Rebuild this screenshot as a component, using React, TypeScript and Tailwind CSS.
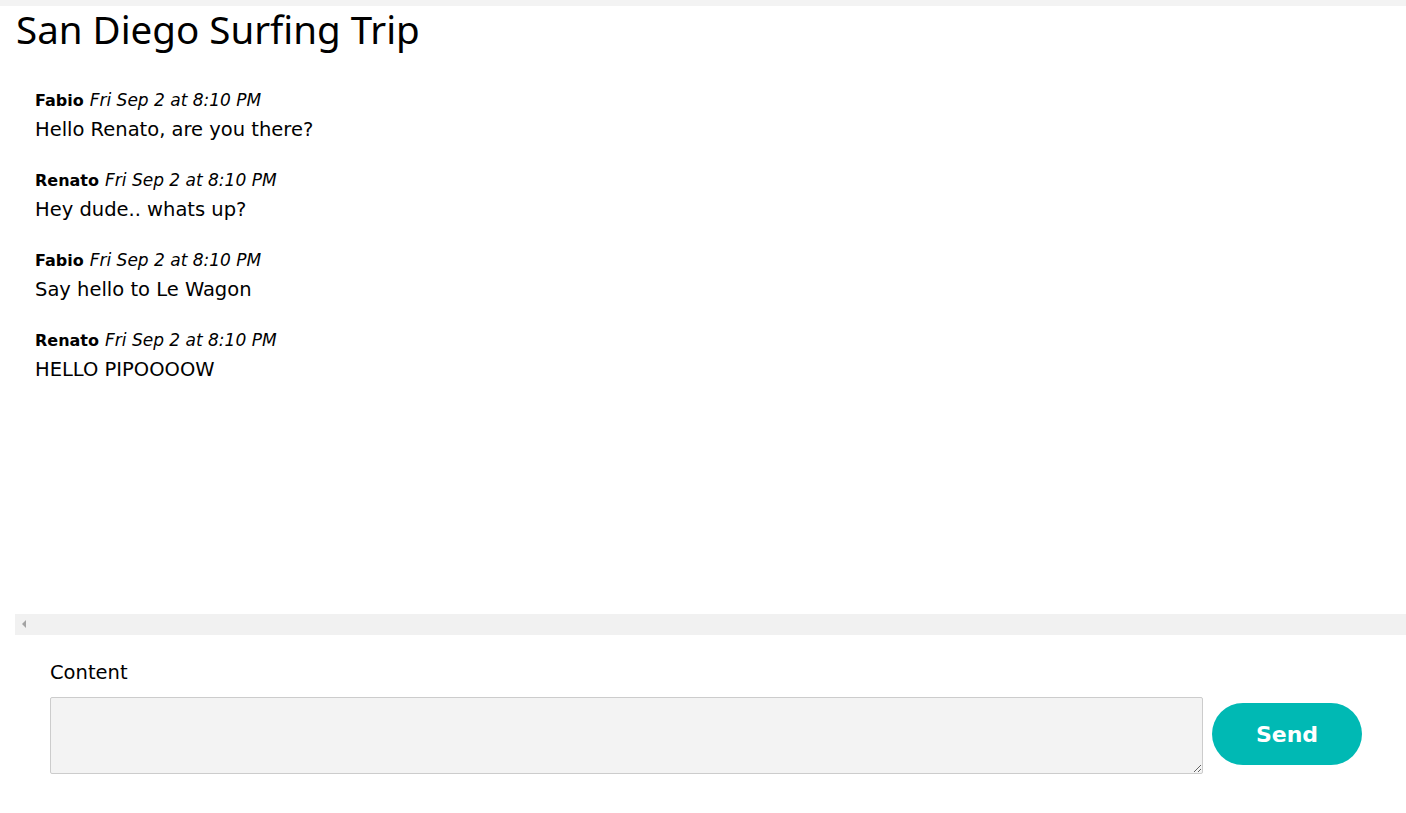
import React from 'react';

interface Message {
    id: number;
    author: string;
    sentAt: string;
    content: string;
}

const messages: Message[] = [
    { id: 1, author: 'Fabio', sentAt: 'Fri Sep 2 at 8:10 PM', content: 'Hello Renato, are you there?' },
    { id: 2, author: 'Renato', sentAt: 'Fri Sep 2 at 8:10 PM', content: 'Hey dude.. whats up?' },
    { id: 3, author: 'Fabio', sentAt: 'Fri Sep 2 at 8:10 PM', content: 'Say hello to Le Wagon' },
    { id: 4, author: 'Renato', sentAt: 'Fri Sep 2 at 8:10 PM', content: 'HELLO PIPOOOOW' },
];

const body = { fontFamily: '"DejaVu Sans", "Noto Sans", sans-serif' };
const heading = { fontFamily: '"Noto Sans", "Lato", sans-serif' };

const App: React.FC = () => {
    return (
        <div className="min-h-[813px] bg-white text-black" style={body}>
            <div className="h-[6px] bg-[#f3f3f3]" />
            <h1 className="px-4 text-[38.5px] leading-[46px] font-normal" style={heading}>
                San Diego Surfing Trip
            </h1>

            {/* chat history */}
            <div className="ml-[15px]">
                <div className="h-[562px] pt-[37px] pl-5">
                    {messages.map((message) => (
                        <div key={message.id} className="mb-[23px]">
                            <div className="h-6 flex items-center whitespace-nowrap">
                                <span className="font-bold text-[16px]">{message.author}</span>
                                <span className="ml-[6px] italic text-[17px]">{message.sentAt}</span>
                            </div>
                            <p className="leading-8 text-[19.5px] pt-px">{message.content}</p>
                        </div>
                    ))}
                </div>
                {/* horizontal scrollbar */}
                <div className="h-[21px] bg-[#f1f1f1] flex">
                    <div className="w-[19px] h-[20px] flex items-center justify-center">
                        <svg width="5" height="8" viewBox="0 0 5 8">
                            <path d="M4 0 L0 4 L4 8 Z" fill="#a3a3a3" />
                        </svg>
                    </div>
                </div>
            </div>

            {/* new message form */}
            <div className="pl-[50px] pr-[44px] pt-[26px]">
                <label className="block text-[19.5px] leading-6 mb-[12px]">Content</label>
                <div className="flex items-start gap-[9px]">
                    <textarea className="flex-1 h-[77px] bg-[#f3f3f3] border border-[#cccccc] rounded-[2px] outline-none" />
                    <button className="mt-[6px] w-[150px] h-[62px] rounded-full bg-[#00b9b4] text-white text-[22px] font-extrabold">
                        Send
                    </button>
                </div>
            </div>
        </div>
    );
};

export default App;
